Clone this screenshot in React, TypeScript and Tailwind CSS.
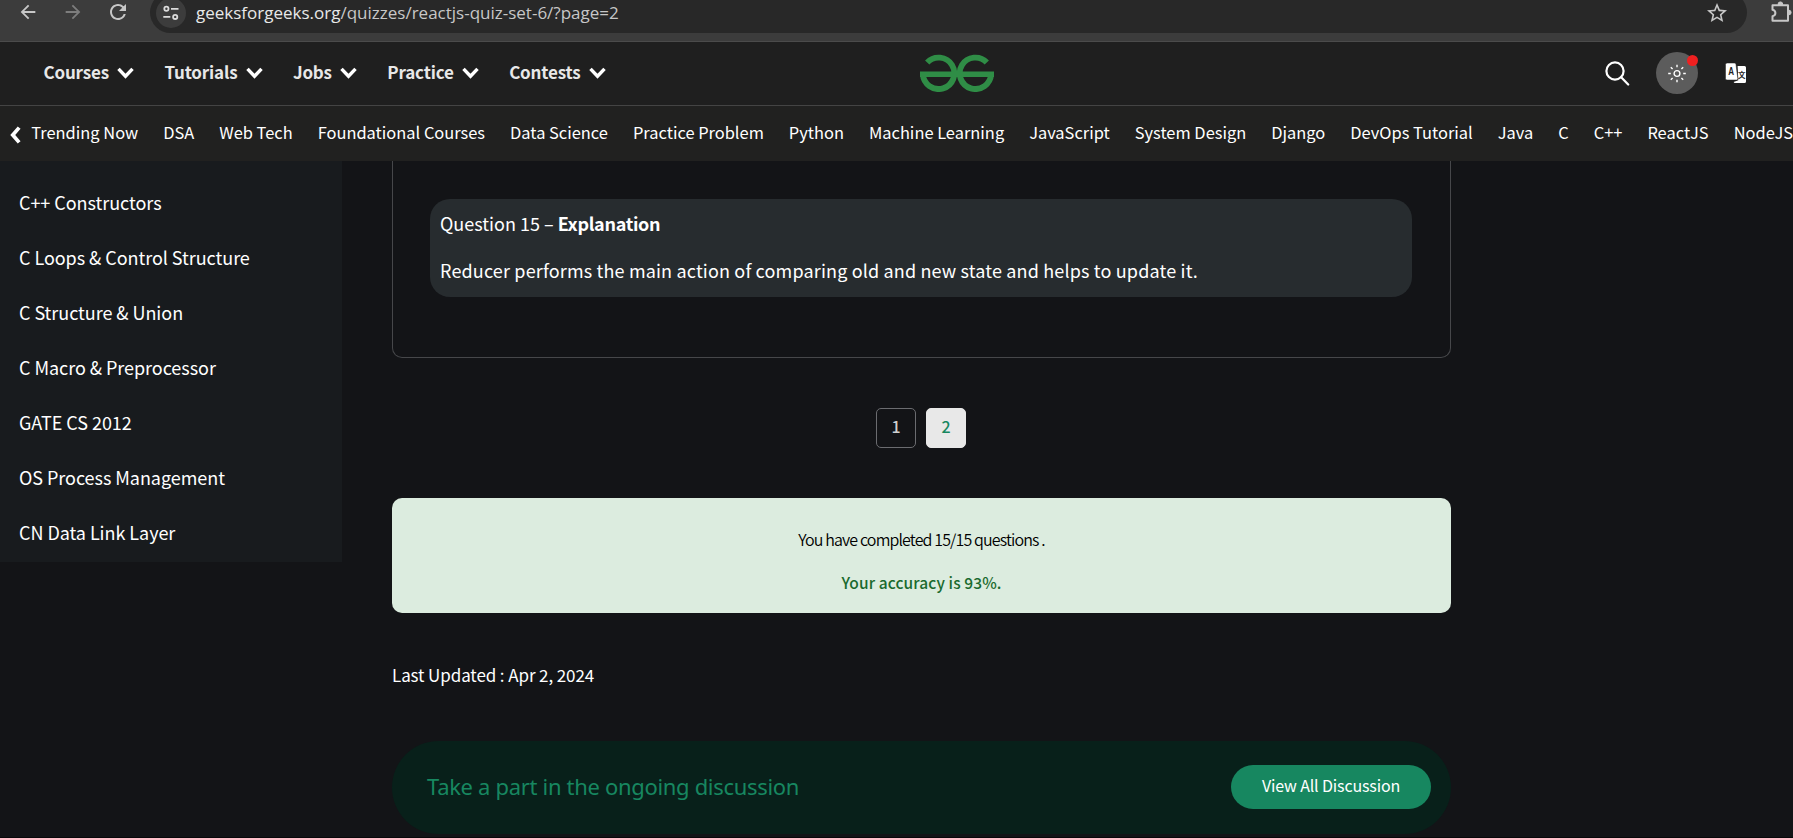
import { MdArrowBack, MdArrowForward, MdRefresh, MdStarBorder } from "react-icons/md";

const menus = ["Courses", "Tutorials", "Jobs", "Practice", "Contests"];

const topics = [
  "Trending Now",
  "DSA",
  "Web Tech",
  "Foundational Courses",
  "Data Science",
  "Practice Problem",
  "Python",
  "Machine Learning",
  "JavaScript",
  "System Design",
  "Django",
  "DevOps Tutorial",
  "Java",
  "C",
  "C++",
  "ReactJS",
  "NodeJS",
];

const quizzes = [
  "C++ Constructors",
  "C Loops & Control Structure",
  "C Structure & Union",
  "C Macro & Preprocessor",
  "GATE CS 2012",
  "OS Process Management",
  "CN Data Link Layer",
];

function ChevronDown() {
  return (
    <svg width="17" height="12" viewBox="0 0 17 12" fill="none" stroke="#fff" strokeWidth="3.4" className="mt-[3px]">
      <path d="M1.500 1.800 8.500 9.200 15.500 1.800" />
    </svg>
  );
}

function ChevronLeft() {
  return (
    <svg width="11" height="18" viewBox="0 0 11 18" fill="none" stroke="#fff" strokeWidth="3.8" className="mt-0.5">
      <path d="M9.300 1.500 2.800 9 9.300 16.500" />
    </svg>
  );
}

function TuneIcon() {
  return (
    <svg width="20" height="20" viewBox="0 0 20 20" fill="none" stroke="#dcdcdc" strokeWidth="1.8">
      <circle cx="5.4" cy="5.8" r="2.1" />
      <path d="M10 5.800h7.500M2.300 13.900h7" />
      <circle cx="14.2" cy="13.9" r="2.1" />
    </svg>
  );
}

function PuzzleIcon() {
  return (
    <svg width="22" height="24" viewBox="0 0 22 24" fill="none" stroke="#c7c7c7" strokeWidth="2" strokeLinejoin="round">
      <path d="M2.500 5.200H18v15.600H2.500v-4.600c1.900-.4 2.900-1.600 2.900-3.200S4.400 10.200 2.500 9.800Z" />
      <path d="M8 4.500a2.400 2.600 0 0 1 4.800 0ZM18.800 10.200a2.300 2.300 0 0 1 0 4.600Z" fill="#c7c7c7" strokeWidth="1" />
    </svg>
  );
}

function Logo() {
  return (
    <svg width="74" height="38" viewBox="0 0 74 38" fill="none" stroke="#2f8d46" strokeWidth="5.9" className="mb-px">
      <path d="M7.200 8.500A15.700 15.700 0 1 1 2.900 19.800" />
      <path d="M66.800 8.500A15.700 15.700 0 1 0 71.100 19.800" />
      <path d="M0 20.200H74" strokeWidth="5.5" />
    </svg>
  );
}

function SearchIcon() {
  return (
    <svg width="26" height="26" viewBox="0 0 26 26" fill="none" stroke="#fff" strokeWidth="2.2" strokeLinecap="round">
      <circle cx="11" cy="11" r="8.6" />
      <path d="m17.200 17.200 7 7.300" />
    </svg>
  );
}

function SunIcon() {
  return (
    <svg width="20" height="20" viewBox="0 0 20 20" fill="none" stroke="#fff" strokeWidth="1.4">
      <circle cx="10" cy="10.5" r="2.9" />
      <path d="M10 1.700v2.600M10 16.700v2.600M1.200 10.500h2.600M16.200 10.500h2.600M3.800 4.300l1.800 1.800M14.400 14.900l1.800 1.800M3.800 16.700l1.800-1.800M14.400 6.100l1.800-1.800" />
    </svg>
  );
}

function TranslateIcon() {
  return (
    <svg width="22" height="22" viewBox="0 0 22 22" fill="#fff">
      <path d="M12.600 4H19.500Q21 4 21 5.500V19.500Q21 21 19.500 21H9.500L8.600 20 13.300 18.200Z" />
      <path
        d="M2 1H9.300Q10.700 1 11 2.400L12.800 16.500Q12.900 18 11.500 18H2Q.5 18 .5 16.500V2.500Q.5 1 2 1Z"
        stroke="#1f1f1f"
        strokeWidth=".5"
      />
      <text
        x="3.2"
        y="12.6"
        fontSize="10"
        fontWeight="700"
        fill="#1f1f1f"
        textLength="5.8"
        lengthAdjust="spacingAndGlyphs"
        fontFamily="Liberation Sans, sans-serif"
      >
        A
      </text>
      <text x="12.9" y="15.6" fontSize="7.5" fontWeight="700" fill="#1f1f1f" fontFamily="Noto Sans CJK SC, sans-serif">
        文
      </text>
    </svg>
  );
}

function BrowserBar() {
  return (
    <div className="flex h-[42px] shrink-0 items-start overflow-hidden border-b border-[#4b4b4b] bg-[#3c3c3c] font-['Open_Sans',sans-serif]">
      <div className="flex h-6 shrink-0 items-center pl-[17px] text-[#c7c7c7]">
        <MdArrowBack size={22} />
        <MdArrowForward size={22} className="ml-[23px] text-[#7d7d7d]" />
        <MdRefresh size={24} className="ml-[22px]" />
      </div>
      <div className="-mt-2 ml-5 flex h-[41px] w-[1597px] shrink-0 items-center rounded-full bg-[#282828] pl-1.5">
        <span className="flex size-[30px] items-center justify-center rounded-full bg-[#3c3c3c]">
          <TuneIcon />
        </span>
        <span className="ml-[10px] text-[17px] text-[#c7c7c7]">
          <span className="text-[#e8e8e8]">geeksforgeeks.org</span>/quizzes/reactjs-quiz-set-6/?page=2
        </span>
        <MdStarBorder size={24} className="mr-[18px] ml-auto text-[#c7c7c7]" />
      </div>
      <div className="ml-[23px] flex h-6 shrink-0 items-center">
        <PuzzleIcon />
      </div>
    </div>
  );
}

function Header() {
  return (
    <header className="flex h-16 shrink-0 items-center border-b border-[#444] bg-[#1f1f1f]">
      <nav className="flex w-[920px] shrink-0 gap-[30px] pb-1 pl-[43.5px]">
        {menus.map((m) => (
          <span
            key={m}
            className="flex items-center gap-[8.5px] text-[17px] leading-6 font-bold tracking-[-0.17px] text-[#e8e8e8]"
          >
            {m}
            <ChevronDown />
          </span>
        ))}
      </nav>
      <Logo />
      <div className="flex flex-1 items-center justify-end pr-[46px] pb-0.5">
        <SearchIcon />
        <span className="relative ml-[26px] flex size-[42px] items-center justify-center rounded-full bg-[#5c5c5c]">
          <SunIcon />
          <span className="absolute top-[3px] right-0 size-[11px] rounded-full bg-[#ef2020]" />
        </span>
        <span className="ml-[27px]">
          <TranslateIcon />
        </span>
      </div>
    </header>
  );
}

function TopicBar() {
  return (
    <nav className="flex h-[55px] shrink-0 items-center overflow-hidden bg-[#212120] pl-[10px]">
      <ChevronLeft />
      <div className="ml-[10.5px] flex gap-[25px] pb-1 text-[16.43px] leading-6 whitespace-nowrap text-white">
        {topics.map((t) => (
          <span key={t}>{t}</span>
        ))}
      </div>
    </nav>
  );
}

function Page({ n, active }: { n: number; active?: boolean }) {
  return (
    <span
      className={
        active
          ? "size-10 rounded-[5px] border border-[#e8e8e8] bg-[#e8e8e8] text-center text-[16px] leading-[35px] font-medium text-[#178760]"
          : "size-10 rounded-[5px] border border-[#6b6c70] text-center text-[16px] leading-[35px] font-medium text-[#d0d0d0]"
      }
    >
      {n}
    </span>
  );
}

export default function App() {
  return (
    <div className="flex h-[838px] w-[1793px] flex-col overflow-hidden border-b border-[#08080a] bg-[#131417] font-['Noto_Sans_CJK_SC',sans-serif] text-white">
      <BrowserBar />
      <Header />
      <TopicBar />
      <div className="flex min-h-0 flex-1 items-start">
        <aside className="w-[342px] shrink-0 bg-[#181b1e] pt-[14px] pb-0.5 pl-[19px] text-[18px] leading-[55px] tracking-[-0.05px]">
          {quizzes.map((q) => (
            <div key={q}>{q}</div>
          ))}
        </aside>

        <main className="ml-[50px] flex w-[1059px] flex-col">
          <section className="h-[197px] rounded-b-[10px] border border-t-0 border-[#46474a] pt-[38px] pr-[38px] pl-[37px]">
            <div className="h-[98px] rounded-[20px] bg-[#272c2f] px-[10px] pt-[11px] text-[18px] leading-[26px]">
              <p>
                Question 15 – <b className="font-bold tracking-[-0.3px]">Explanation</b>
              </p>
              <p className="mt-[21px] tracking-[0.16px]">
                Reducer performs the main action of comparing old and new state and helps to update it.
              </p>
            </div>
          </section>

          <div className="mt-[50px] flex justify-center gap-[10px] pr-px">
            <Page n={1} />
            <Page n={2} active />
          </div>

          <section className="mt-[50px] h-[115px] rounded-[10px] bg-[#dcecdf] pt-[29px] text-center text-[16px] leading-6">
            <p className="font-[350] tracking-[-0.86px] text-black">You have completed 15/15 questions .</p>
            <p className="mt-[19px] text-[15.5px] font-medium tracking-[0.1px] text-[#1a6a2e]">Your accuracy is 93%.</p>
          </section>

          <p className="mt-[50px] text-[17px] leading-6 tracking-[-0.1px]">Last Updated : Apr 2, 2024</p>

          <section className="mt-[54px] flex h-[93px] shrink-0 items-center justify-between rounded-full bg-[#08201a] pr-5 pb-0.5 pl-[35px]">
            <span className="font-['Noto_Sans',sans-serif] text-[22px] font-normal tracking-[-0.32px] text-[#178760]">
              Take a part in the ongoing discussion
            </span>
            <button className="h-11 w-[200px] rounded-full bg-[#178760] pb-1 text-[16px] tracking-[-0.15px] text-white">
              View All Discussion
            </button>
          </section>
        </main>
      </div>
    </div>
  );
}
